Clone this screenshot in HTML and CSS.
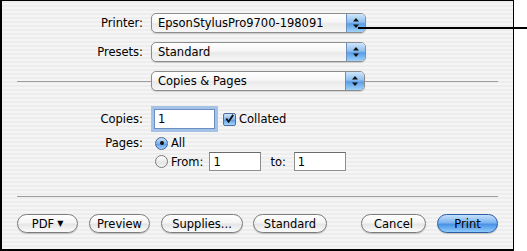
FILE: index.html
```html
<!DOCTYPE html>
<html>
<head>
<meta charset="utf-8">
<link rel="stylesheet" href="styles.css">
</head>
<body>
<div class="dialog">
  <div class="row">
    <span class="label">Printer:</span>
    <div class="popup popup-wide">
      <span class="ptext">EpsonStylusPro9700-198091</span>
      <span class="arrows"><svg width="8" height="12" viewBox="0 0 8 12"><path d="M4 1 L7 4.5 L1 4.5 Z M4 11 L7 7.5 L1 7.5 Z" fill="#111"/></svg></span>
    </div>
  </div>
  <div class="row">
    <span class="label">Presets:</span>
    <div class="popup popup-wide">
      <span class="ptext">Standard</span>
      <span class="arrows"><svg width="8" height="12" viewBox="0 0 8 12"><path d="M4 1 L7 4.5 L1 4.5 Z M4 11 L7 7.5 L1 7.5 Z" fill="#111"/></svg></span>
    </div>
  </div>
  <div class="row section-row">
    <span class="rule rule-left"></span>
    <div class="popup popup-wide">
      <span class="ptext">Copies &amp; Pages</span>
      <span class="arrows"><svg width="8" height="12" viewBox="0 0 8 12"><path d="M4 1 L7 4.5 L1 4.5 Z M4 11 L7 7.5 L1 7.5 Z" fill="#111"/></svg></span>
    </div>
    <span class="rule rule-right"></span>
  </div>

  <div class="pane">
    <div class="prow copies-row">
      <span class="label">Copies:</span>
      <span class="field field-copies focused">1</span>
      <span class="check"><svg width="12" height="12" viewBox="0 0 12 12"><path d="M2.5 5.5 L5 9 L10 1.5" stroke="#111" stroke-width="2" fill="none"/></svg></span>
      <span class="opt">Collated</span>
    </div>
    <div class="prow pages-row">
      <span class="label">Pages:</span>
      <span class="radio on"><span class="dot"></span></span>
      <span class="opt">All</span>
    </div>
    <div class="prow from-row">
      <span class="label"></span>
      <span class="radio"></span>
      <span class="opt from-label">From:</span>
      <span class="field field-small">1</span>
      <span class="opt to-label">to:</span>
      <span class="field field-small">1</span>
    </div>
  </div>

  <div class="sep"></div>

  <div class="buttons">
    <span class="btn btn-pdf">PDF <span class="tri">▼</span></span>
    <span class="btn btn-preview">Preview</span>
    <span class="btn btn-supplies">Supplies...</span>
    <span class="btn btn-standard">Standard</span>
    <span class="btn btn-cancel">Cancel</span>
    <span class="btn btn-print">Print</span>
  </div>
</div>
<div class="callout"></div>
</body>
</html>
```

FILE: styles.css
```css
html, body {
  margin: 0;
  padding: 0;
  background: #ffffff;
}
body {
  position: relative;
  width: 527px;
  height: 251px;
  overflow: hidden;
  font-family: "DejaVu Sans", "Liberation Sans", sans-serif;
  font-size: 11.5px;
  color: #000;
}
.dialog {
  box-sizing: border-box;
  width: 514px;
  height: 251px;
  border-style: solid;
  border-color: #000;
  border-width: 1px 1px 2px 2px;
  background: repeating-linear-gradient(to bottom, #ededed 0px, #ededed 2px, #f5f5f5 2px, #f5f5f5 4px);
  padding: 12px 15px 0 0;
  display: flex;
  flex-direction: column;
}
.row {
  display: flex;
  align-items: center;
  height: 20px;
  margin-bottom: 9px;
}
.label {
  width: 141px;
  text-align: right;
  margin-right: 8px;
  flex: none;
}
.popup {
  box-sizing: border-box;
  height: 20px;
  border: 1px solid #8c8c8c;
  border-radius: 5px;
  background: linear-gradient(#ffffff, #f6f6f6 45%, #e9e9e9 55%, #f7f7f7);
  display: flex;
  align-items: center;
  overflow: hidden;
  box-shadow: 0 1px 1px rgba(0,0,0,0.15);
}
.popup-wide {
  width: 215px;
}
.ptext {
  flex: 1;
  padding-left: 6px;
  white-space: nowrap;
}
.arrows {
  width: 18px;
  height: 18px;
  border-left: 1px solid #6a8fc0;
  background: linear-gradient(#cfe6fb, #8fbff0 45%, #5a9de6 55%, #9fd2fb);
  display: flex;
  align-items: center;
  justify-content: center;
}
.section-row {
  margin-bottom: 0;
}
.rule {
  height: 1px;
  background: #9d9d9d;
  flex: none;
}
.rule-left {
  margin-left: 15px;
  width: 134px;
}
.rule-right {
  width: 133px;
}
.pane {
  padding-top: 18px;
  display: flex;
  flex-direction: column;
}
.prow {
  display: flex;
  align-items: center;
}
.copies-row {
  height: 20px;
}
.pages-row {
  height: 14px;
  margin-top: 7px;
}
.from-row {
  height: 19px;
  margin-top: 2px;
}
.field {
  box-sizing: border-box;
  height: 20px;
  background: #fff;
  border: 1px solid #8e8e8e;
  border-top-color: #6a6a6a;
  padding: 1px 0 0 3px;
  line-height: 16px;
  flex: none;
}
.field-copies {
  width: 61px;
  margin-left: 3px;
}
.focused {
  box-shadow: 0 0 0 3px #a3c2e6;
  border-color: #6b8fc4;
}
.field-small {
  width: 52px;
  height: 19px;
}
.check {
  box-sizing: border-box;
  width: 13px;
  height: 13px;
  margin-left: 8px;
  border: 1px solid #4d6f9e;
  border-radius: 2px;
  background: linear-gradient(#cfe5fb, #7fb3ec 50%, #5b9ce6 55%, #a9d6fb);
  display: flex;
  align-items: center;
  justify-content: center;
}
.opt {
  margin-left: 3px;
}
.radio {
  box-sizing: border-box;
  width: 13px;
  height: 13px;
  margin-left: 4px;
  border: 1px solid #7a7a7a;
  border-radius: 50%;
  background: linear-gradient(#ffffff, #e6e6e6 60%, #f6f6f6);
  display: flex;
  align-items: center;
  justify-content: center;
  flex: none;
}
.radio.on {
  border-color: #45699b;
  background: linear-gradient(#cfe5fb, #7fb3ec 50%, #5b9ce6 55%, #a9d6fb);
}
.dot {
  width: 4px;
  height: 4px;
  border-radius: 50%;
  background: #111;
}
.from-label {
  margin-right: 6px;
}
.to-label {
  margin-left: 9px;
  margin-right: 8px;
}
.sep {
  height: 1px;
  background: #9d9d9d;
  margin: 25px 0 0 15px;
}
.buttons {
  display: flex;
  margin-top: 17px;
  padding-left: 15px;
}
.btn {
  box-sizing: border-box;
  height: 19px;
  border: 1px solid #7d7d7d;
  border-radius: 10px;
  background: linear-gradient(#ffffff, #f4f4f4 45%, #e6e6e6 55%, #fbfbfb);
  display: flex;
  align-items: center;
  justify-content: center;
  box-shadow: 0 1px 1px rgba(0,0,0,0.2);
  flex: none;
  white-space: nowrap;
}
.tri {
  font-size: 8px;
  margin-left: 3px;
}
.btn-pdf { width: 61px; }
.btn-preview { width: 61px; margin-left: 11px; }
.btn-supplies { width: 82px; margin-left: 11px; }
.btn-standard { width: 74px; margin-left: 10px; }
.btn-cancel { width: 65px; margin-left: auto; }
.btn-print {
  width: 61px;
  margin-left: 11px;
  border-color: #2d5fa5;
  background: linear-gradient(#c5e0fb, #7db4ef 45%, #4a92e6 55%, #8fcbfb);
}
.callout {
  position: absolute;
  left: 358px;
  top: 27px;
  width: 169px;
  height: 2px;
  background: #000;
}
```
